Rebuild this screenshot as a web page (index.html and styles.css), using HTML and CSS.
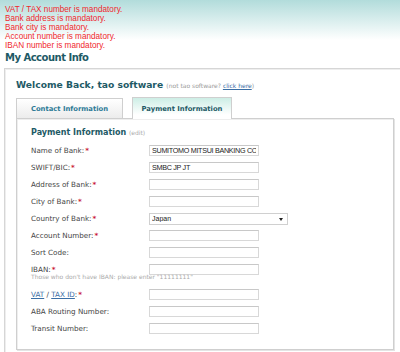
FILE: index.html
```html
<!DOCTYPE html>
<html lang="en">
<head>
  <meta charset="UTF-8" />
  <title>My Account Info</title>
  <link rel="stylesheet" href="styles.css">
</head>
<body>

<div class="top">
  <ul class="errors">
    <li>VAT / TAX number is mandatory.</li>
    <li>Bank address is mandatory.</li>
    <li>Bank city is mandatory.</li>
    <li>Account number is mandatory.</li>
    <li>IBAN number is mandatory.</li>
  </ul>
  <h1>My Account Info</h1>
</div>

<div class="account">
  <div class="welcome">
    Welcome Back, tao software
    <span class="not-you">(not tao software? <a href="#">click here</a>)</span>
  </div>

  <div class="tabs">
    <div class="tab">Contact Information</div>
    <div class="tab active">Payment Information</div>
  </div>

  <div class="panel">
    <h3>Payment Information <span class="edit">(edit)</span></h3>

    <div class="row">
      <label>Name of Bank:<span class="req">*</span></label>
      <input type="text" value="SUMITOMO MITSUI BANKING CORPORATION">
    </div>
    <div class="row">
      <label>SWIFT/BIC:<span class="req">*</span></label>
      <input type="text" value="SMBC JP JT">
    </div>
    <div class="row">
      <label>Address of Bank:<span class="req">*</span></label>
      <input type="text">
    </div>
    <div class="row">
      <label>City of Bank:<span class="req">*</span></label>
      <input type="text">
    </div>
    <div class="row">
      <label>Country of Bank:<span class="req">*</span></label>
      <span class="select-wrap">
        <select>
          <option>Japan</option>
        </select>
      </span>
    </div>
    <div class="row">
      <label>Account Number:<span class="req">*</span></label>
      <input type="text">
    </div>
    <div class="row">
      <label>Sort Code:</label>
      <input type="text">
    </div>
    <div class="row">
      <label>IBAN:<span class="req">*</span></label>
      <input type="text">
    </div>
    <div class="hint">Those who don't have IBAN: please enter "11111111"</div>
    <div class="row">
      <label><a href="#">VAT</a> / <a href="#">TAX ID</a>:<span class="req">*</span></label>
      <input type="text">
    </div>
    <div class="row">
      <label>ABA Routing Number:</label>
      <input type="text">
    </div>
    <div class="row">
      <label>Transit Number:</label>
      <input type="text">
    </div>
  </div>
</div>

</body>
</html>
```

FILE: styles.css
```css
* { box-sizing: border-box; }

html, body { overflow: hidden; }

body {
  margin: 0;
  font-family: 'DejaVu Sans', Verdana, sans-serif;
  font-size: 7.2px;
  color: #444;
  background: #fff;
  width: 400px;
  height: 352px;
}

.top {
  background: linear-gradient(#b2dcdb, #ffffff 40px);
  padding: 5px 0 0 5px;
}

.errors {
  list-style: none;
  margin: 0;
  padding: 0;
  color: #f0282d;
  font-family: 'Liberation Sans', Arial, sans-serif;
  font-size: 8.2px;
  line-height: 9px;
}

h1 {
  margin: 2px 0 0;
  font-size: 10px;
  letter-spacing: -0.5px;
  line-height: 12px;
  color: #1e5a66;
}

.account {
  margin: 4px 0 0 4px;
  width: 410px;
  border: 1px solid #d6d6d6;
  border-right: none;
  box-shadow: inset 1px 1px 0 #eee;
  padding: 10px 0 3px 11px;
  height: 300px;
}

.welcome {
  font-size: 9.2px;
  font-weight: bold;
  color: #1e5a66;
  line-height: 12px;
}

.not-you {
  font-size: 6px;
  font-weight: normal;
  color: #999;
}

.not-you a { color: #3a6ea5; }

.tabs {
  display: flex;
  gap: 9px;
  margin-top: 5px;
  height: 21px;
  align-items: flex-end;
}

.tab {
  width: 107px;
  height: 20px;
  border: 1px solid #cfcfcf;
  border-bottom: none;
  background: linear-gradient(#ffffff, #ececec);
  color: #2c7a96;
  font-size: 6.8px;
  font-weight: bold;
  text-align: center;
  line-height: 20px;
}

.tab.active {
  width: 100px;
  height: 22px;
  background: linear-gradient(#cdeee6, #ffffff 80%);
  color: #1e5a66;
  position: relative;
  top: 1px;
  line-height: 22px;
}

.panel {
  width: 378px;
  height: 232px;
  border: 1px solid #cfcfcf;
  box-shadow: inset 1px 1px 0 #eee, 1px 1px 0 #e4e4e4;
  padding: 8px 14px;
}

h3 {
  margin: 0 0 3px;
  font-size: 8px;
  line-height: 12px;
  color: #1e5a66;
}

.edit {
  font-weight: normal;
  font-size: 6px;
  color: #aaa;
}

.row {
  display: flex;
  align-items: center;
  height: 17px;
}

.row label {
  width: 118px;
  color: #444;
}

.req {
  color: #c8102e;
  font-weight: bold;
  margin-left: 1px;
}

.row label a { color: #3a6ea5; }

input[type="text"] {
  width: 110px;
  height: 11px;
  padding: 0 2px;
  border: 1px solid #d8d8d8;
  border-top-color: #c8c8c8;
  font-family: 'Liberation Sans', Arial, sans-serif;
  font-size: 7.2px;
  letter-spacing: -0.3px;
  color: #222;
  background: #fff;
  overflow: hidden;
}

.select-wrap {
  position: relative;
  display: block;
}

.select-wrap::after {
  content: "";
  position: absolute;
  right: 5px;
  top: 5px;
  border-left: 2px solid transparent;
  border-right: 2px solid transparent;
  border-top: 3px solid #222;
}

select {
  appearance: none;
  display: block;
  width: 139px;
  height: 12px;
  padding: 0 2px;
  border: 1px solid #d0d0d0;
  border-radius: 0;
  font-family: 'Liberation Sans', Arial, sans-serif;
  font-size: 7px;
  color: #222;
  background: #fff;
}

.hint {
  font-size: 6px;
  color: #aaa;
  margin: -5px 0 5px;
  line-height: 8px;
}
```
